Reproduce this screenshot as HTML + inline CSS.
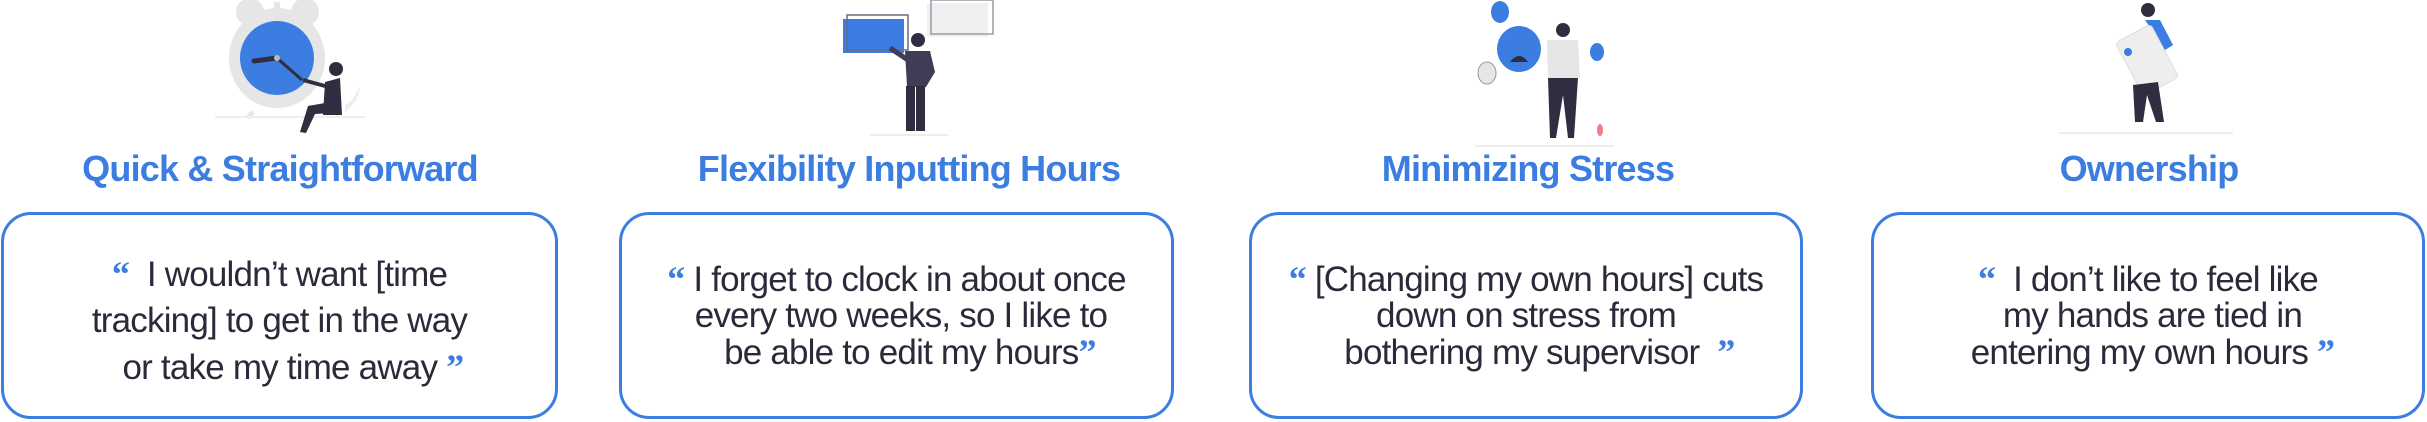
<!DOCTYPE html>
<html><head><meta charset="utf-8"><style>
body{margin:0;width:2427px;height:422px;background:#fff;position:relative;overflow:hidden;font-family:"Liberation Sans",sans-serif}
.t{position:absolute;top:148px;font-size:36px;font-weight:bold;color:#3b7de0;text-align:center;width:700px;margin-left:-350px;letter-spacing:-0.8px}
.b{position:absolute;top:212px;border:3px solid #3b7de0;border-radius:30px;display:flex;align-items:center;justify-content:center;text-align:center;color:#2b2a3a;font-size:35px;letter-spacing:-0.8px;box-sizing:border-box;height:207px;white-space:nowrap}
.q{color:#3b7de0;font-family:"Liberation Serif",serif;font-weight:bold;font-size:36px}
svg{position:absolute;top:0;left:0}
</style></head><body>
<svg width="2427" height="160">
<circle cx="250" cy="12" r="14" fill="#e6e6e6"/><circle cx="305" cy="12" r="14" fill="#e6e6e6"/>
<rect x="274" y="2" width="6" height="10" fill="#e6e6e6"/>
<ellipse cx="277" cy="58" rx="48" ry="50" fill="#e6e6e6"/>
<circle cx="277" cy="58" r="37" fill="#3b7de0"/>
<line x1="253" y1="112" x2="248" y2="118" stroke="#e6e6e6" stroke-width="5"/>
<line x1="215" y1="117" x2="365" y2="117" stroke="#eee" stroke-width="2"/>
<line x1="277" y1="58" x2="254" y2="61" stroke="#2f2e41" stroke-width="5" stroke-linecap="round"/>
<line x1="277" y1="58" x2="302" y2="80" stroke="#2f2e41" stroke-width="3"/>
<circle cx="277" cy="58" r="3" fill="#bbb"/>
<circle cx="336" cy="69" r="7" fill="#2f2e41"/>
<path d="M325 82 L340 78 L342 115 L323 115 Z" fill="#2f2e41"/>
<path d="M325 103 L308 106 L300 132 L306 133 L315 114 L330 113Z" fill="#2f2e41"/>
<line x1="303" y1="80" x2="325" y2="86" stroke="#2f2e41" stroke-width="4"/>
<path d="M345 112 Q360 100 360 85 Q355 100 345 105Z" fill="#eee"/>
<rect x="927" y="3" width="61" height="34" fill="#f0f0f0"/><rect x="931" y="0" width="62" height="34" fill="none" stroke="#9a99a8" stroke-width="1.5"/>
<rect x="843" y="19" width="61" height="34" fill="#3b7de0"/><rect x="847" y="15" width="61" height="35" fill="none" stroke="#6a6a80" stroke-width="1.5"/>
<circle cx="918" cy="40" r="7" fill="#2f2e41"/>
<path d="M905 51 L930 51 L935 72 L926 87 L907 87Z" fill="#3f3d56"/>
<line x1="890" y1="48" x2="908" y2="60" stroke="#3f3d56" stroke-width="5"/>
<rect x="906" y="86" width="9" height="45" fill="#2f2e41"/><rect x="916" y="86" width="9" height="45" fill="#2f2e41"/>
<line x1="870" y1="135" x2="948" y2="135" stroke="#eee" stroke-width="2"/>
<ellipse cx="1500" cy="12" rx="9" ry="11" fill="#3b7de0"/>
<ellipse cx="1519" cy="49" rx="22" ry="23" fill="#3b7de0"/>
<path d="M1510 62 Q1519 50 1528 62Z" fill="#2f2e41"/>
<ellipse cx="1597" cy="52" rx="7" ry="9" fill="#3b7de0"/>
<ellipse cx="1487" cy="73" rx="9" ry="11" fill="#e6e6e6" stroke="#999"/>
<circle cx="1563" cy="30" r="7" fill="#2f2e41"/>
<path d="M1547 40 L1578 40 L1580 78 L1548 78Z" fill="#e6e6e6"/>
<path d="M1548 78 L1578 78 L1574 138 L1568 138 L1563 95 L1556 138 L1550 138Z" fill="#2f2e41"/>
<line x1="1475" y1="146" x2="1614" y2="146" stroke="#eee" stroke-width="2"/>
<ellipse cx="1600" cy="130" rx="3" ry="6" fill="#f27d8a"/>
<circle cx="2148" cy="10" r="7" fill="#2f2e41"/>
<path d="M2145 20 L2160 20 L2173 45 L2165 50Z" fill="#3b7de0"/>
<g transform="rotate(-28 2147 60)"><rect x="2127" y="30" width="40" height="60" rx="4" fill="#eee" stroke="#ddd"/></g>
<circle cx="2128" cy="52" r="4" fill="#3b7de0"/>
<path d="M2133 85 L2158 82 L2164 122 L2156 122 L2147 95 L2143 122 L2135 122Z" fill="#2f2e41"/>
<line x1="2059" y1="133" x2="2233" y2="133" stroke="#eee" stroke-width="2"/>
</svg>
<div class="t" style="left:280px">Quick &amp; Straightforward</div>
<div class="t" style="left:909px">Flexibility Inputting Hours</div>
<div class="t" style="left:1528px">Minimizing Stress</div>
<div class="t" style="left:2149px">Ownership</div>
<div class="b" style="left:1px;width:557px;line-height:46px;padding-top:10px"><div><span class="q">“</span>&nbsp; I wouldn’t want [time<br>tracking] to get in the way<br>&nbsp;&nbsp;&nbsp;or take my time away <span class="q">”</span></div></div>
<div class="b" style="left:619px;width:555px;line-height:36px"><div><span class="q">“</span> I forget to clock in about once<br>&nbsp;every two weeks, so I like to<br>&nbsp;&nbsp;&nbsp;be able to edit my hours<span class="q">”</span></div></div>
<div class="b" style="left:1249px;width:554px;line-height:36px"><div><span class="q">“</span> [Changing my own hours] cuts<br>down on stress from<br>&nbsp;&nbsp;&nbsp;bothering my supervisor &nbsp;<span class="q">”</span></div></div>
<div class="b" style="left:1871px;width:554px;line-height:36px"><div><span class="q">“</span>&nbsp; I don’t like to feel like<br>&nbsp;my hands are tied in<br>&nbsp;entering my own hours <span class="q">”</span></div></div>
</body></html>
